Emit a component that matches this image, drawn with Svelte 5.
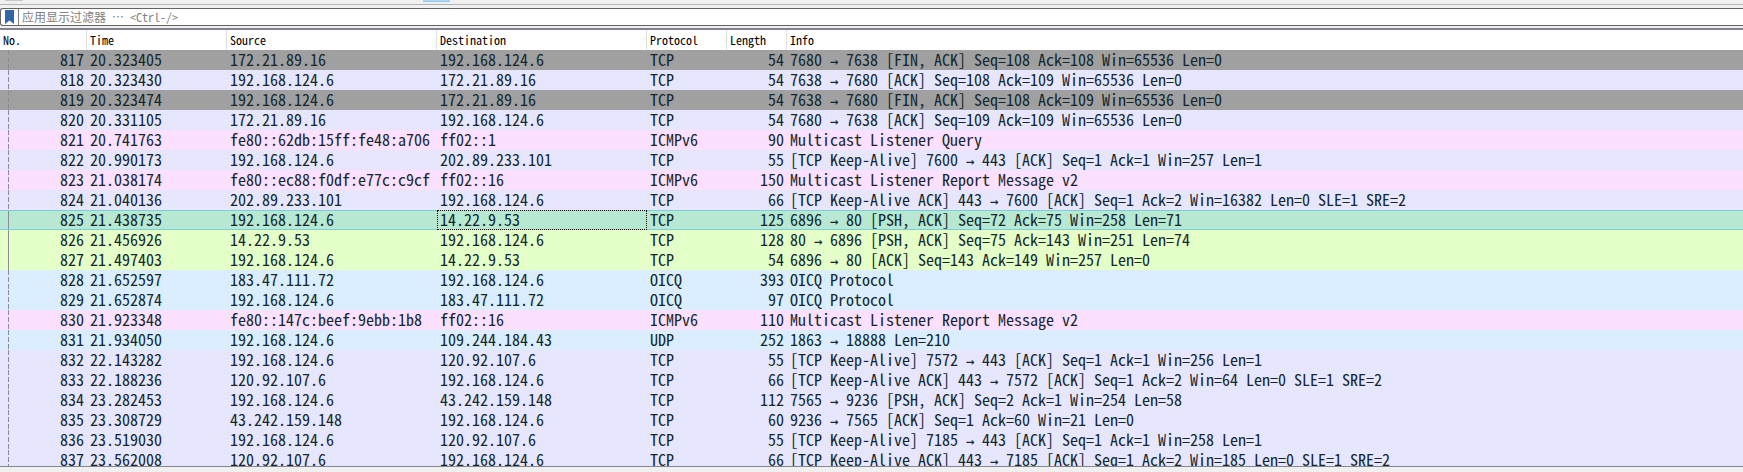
<script>
  const columns = ['No.', 'Time', 'Source', 'Destination', 'Protocol', 'Length', 'Info'];

  const packets = [
    [817, '20.323405', '172.21.89.16', '192.168.124.6', 'TCP', 54, '7680 → 7638 [FIN, ACK] Seq=108 Ack=108 Win=65536 Len=0', 'closing'],
    [818, '20.323430', '192.168.124.6', '172.21.89.16', 'TCP', 54, '7638 → 7680 [ACK] Seq=108 Ack=109 Win=65536 Len=0', 'tcp'],
    [819, '20.323474', '192.168.124.6', '172.21.89.16', 'TCP', 54, '7638 → 7680 [FIN, ACK] Seq=108 Ack=109 Win=65536 Len=0', 'closing'],
    [820, '20.331105', '172.21.89.16', '192.168.124.6', 'TCP', 54, '7680 → 7638 [ACK] Seq=109 Ack=109 Win=65536 Len=0', 'tcp'],
    [821, '20.741763', 'fe80::62db:15ff:fe48:a706', 'ff02::1', 'ICMPv6', 90, 'Multicast Listener Query', 'icmp'],
    [822, '20.990173', '192.168.124.6', '202.89.233.101', 'TCP', 55, '[TCP Keep-Alive] 7600 → 443 [ACK] Seq=1 Ack=1 Win=257 Len=1', 'tcp'],
    [823, '21.038174', 'fe80::ec88:f0df:e77c:c9cf', 'ff02::16', 'ICMPv6', 150, 'Multicast Listener Report Message v2', 'icmp'],
    [824, '21.040136', '202.89.233.101', '192.168.124.6', 'TCP', 66, '[TCP Keep-Alive ACK] 443 → 7600 [ACK] Seq=1 Ack=2 Win=16382 Len=0 SLE=1 SRE=2', 'tcp'],
    [825, '21.438735', '192.168.124.6', '14.22.9.53', 'TCP', 125, '6896 → 80 [PSH, ACK] Seq=72 Ack=75 Win=258 Len=71', 'selected'],
    [826, '21.456926', '14.22.9.53', '192.168.124.6', 'TCP', 128, '80 → 6896 [PSH, ACK] Seq=75 Ack=143 Win=251 Len=74', 'http'],
    [827, '21.497403', '192.168.124.6', '14.22.9.53', 'TCP', 54, '6896 → 80 [ACK] Seq=143 Ack=149 Win=257 Len=0', 'http'],
    [828, '21.652597', '183.47.111.72', '192.168.124.6', 'OICQ', 393, 'OICQ Protocol', 'udp'],
    [829, '21.652874', '192.168.124.6', '183.47.111.72', 'OICQ', 97, 'OICQ Protocol', 'udp'],
    [830, '21.923348', 'fe80::147c:beef:9ebb:1b8', 'ff02::16', 'ICMPv6', 110, 'Multicast Listener Report Message v2', 'icmp'],
    [831, '21.934050', '192.168.124.6', '109.244.184.43', 'UDP', 252, '1863 → 18888 Len=210', 'udp'],
    [832, '22.143282', '192.168.124.6', '120.92.107.6', 'TCP', 55, '[TCP Keep-Alive] 7572 → 443 [ACK] Seq=1 Ack=1 Win=256 Len=1', 'tcp'],
    [833, '22.188236', '120.92.107.6', '192.168.124.6', 'TCP', 66, '[TCP Keep-Alive ACK] 443 → 7572 [ACK] Seq=1 Ack=2 Win=64 Len=0 SLE=1 SRE=2', 'tcp'],
    [834, '23.282453', '192.168.124.6', '43.242.159.148', 'TCP', 112, '7565 → 9236 [PSH, ACK] Seq=2 Ack=1 Win=254 Len=58', 'tcp'],
    [835, '23.308729', '43.242.159.148', '192.168.124.6', 'TCP', 60, '9236 → 7565 [ACK] Seq=1 Ack=60 Win=21 Len=0', 'tcp'],
    [836, '23.519030', '192.168.124.6', '120.92.107.6', 'TCP', 55, '[TCP Keep-Alive] 7185 → 443 [ACK] Seq=1 Ack=1 Win=258 Len=1', 'tcp'],
    [837, '23.562008', '120.92.107.6', '192.168.124.6', 'TCP', 66, '[TCP Keep-Alive ACK] 443 → 7185 [ACK] Seq=1 Ack=2 Win=185 Len=0 SLE=1 SRE=2', 'tcp']
  ];

  // Rows that belong to the same conversation as the selected packet
  const related = [825, 826, 827];
</script>

<div class="window">
  <div class="toolbar">
    <span class="tool"></span>
    <span class="tool active"></span>
  </div>

  <div class="filter">
    <button class="bookmark" aria-label="书签">
      <svg width="9" height="14" viewBox="0 0 9 14"><path d="M0 0h9v14L4.5 10.5 0 14z" fill="#3465a4" /></svg>
    </button>
    <input type="text" aria-label="应用显示过滤器" placeholder="应用显示过滤器 ⋯ <Ctrl-/>" />
  </div>

  <div class="list">
    <table>
      <colgroup>
        <col class="c-no" /><col class="c-time" /><col class="c-addr" /><col class="c-addr" /><col class="c-proto" /><col class="c-len" /><col />
      </colgroup>
      <thead>
        <tr>{#each columns as name}<th scope="col">{name}</th>{/each}</tr>
      </thead>
      <tbody>
        {#each packets as [no, time, source, destination, protocol, length, info, kind]}
          <tr class={kind}>
            <td class="num mark" class:solid={related.includes(no)}>{no}</td>
            <td>{time}</td>
            <td>{source}</td>
            <td class:focused={kind === 'selected'}>{destination}</td>
            <td>{protocol}</td>
            <td class="num">{length}</td>
            <td>{#each info.split('→') as part, i}{#if i > 0}<span class="arrow">→</span>{/if}{part}{/each}</td>
          </tr>
        {/each}
      </tbody>
    </table>
  </div>
  <div class="splitter"></div>
</div>

<style>
  :global(body) {
    margin: 0;
    background: #f0f0f0;
  }

  .window {
    display: flex;
    flex-direction: column;
    height: 100vh;
    overflow: hidden;
  }

  .toolbar {
    display: flex;
    flex: none;
    box-sizing: border-box;
    height: 5px;
    padding-left: 5px;
    gap: 400px;
    border-bottom: 1px solid #b4b4b4;
  }

  .tool {
    width: 18px;
    height: 1px;
    background: #c8c8c8;
  }

  .tool.active {
    box-sizing: border-box;
    width: 27px;
    height: 2px;
    background: #b4d4ea;
    border-bottom: 1px solid #90c8f6;
  }

  .filter {
    display: flex;
    flex: none;
    align-items: center;
    box-sizing: border-box;
    height: 18px;
    margin: 3px 0 2px;
    border: 1px solid #646464;
    border-right: 0;
    border-radius: 3px 0 0 3px;
    background: #fff;
  }

  .bookmark {
    display: flex;
    align-items: center;
    box-sizing: border-box;
    width: 18px;
    height: 16px;
    padding: 0 0 0 4px;
    border: 0;
    border-right: 1px solid #808080;
    background: none;
  }

  input {
    flex: 1;
    min-width: 0;
    height: 16px;
    padding: 0 3px;
    border: 0;
    outline: 0;
    background: none;
    font: 12px/16px 'Noto Sans Mono CJK SC', 'Noto Sans CJK SC', monospace;
  }

  input::placeholder {
    color: #808080;
    opacity: 1;
  }

  .list {
    flex: 1;
    min-height: 0;
    overflow: hidden;
    border-top: 2px solid #828290;
    border-bottom: 1px solid #828790;
    background: #fff;
  }

  table {
    width: 100%;
    table-layout: fixed;
    border-collapse: separate;
    border-spacing: 0;
  }

  .c-no { width: 87px; }
  .c-time { width: 140px; }
  .c-addr { width: 210px; }
  .c-proto { width: 80px; }
  .c-len { width: 60px; }

  th {
    box-sizing: border-box;
    height: 20px;
    padding: 0 3px;
    border-right: 1px solid #e0e0e0;
    color: #000;
    font: 12px/20px 'Noto Sans Mono CJK SC', 'Liberation Mono', monospace;
    text-align: left;
  }

  th:last-child {
    border-right: 0;
  }

  td {
    box-sizing: border-box;
    height: 20px;
    padding: 0 3px 2px;
    color: #12272e;
    font: 16px/16px 'Noto Sans Mono CJK SC', 'DejaVu Sans Mono', monospace;
    white-space: pre;
  }

  .num {
    text-align: right;
  }

  .arrow {
    display: inline-block;
    width: 8px;
    font: 14px/1px 'DejaVu Sans Mono', monospace;
  }

  .mark {
    background: repeating-linear-gradient(#8c8c96 0 5px, transparent 5px 7px) 8px 0 / 1px 100% no-repeat;
  }

  .mark.solid {
    background: linear-gradient(#8c8c96, #8c8c96) 8px 0 / 1px 100% no-repeat;
  }

  .closing { background: #a0a0a0; }
  .tcp { background: #e7e6ff; }
  .icmp { background: #fce0ff; }
  .http { background: #e4ffc7; }
  .udp { background: #daeeff; }
  .selected { background: #b7e8d2; }

  .selected td {
    border-top: 1px solid #80cde0;
    border-bottom: 1px solid #80cde0;
  }

  .selected .focused {
    padding: 0 2px 2px;
    border: 1px dotted #000;
  }

  .splitter {
    flex: none;
    height: 5px;
    background: #f0f0f0;
  }
</style>
